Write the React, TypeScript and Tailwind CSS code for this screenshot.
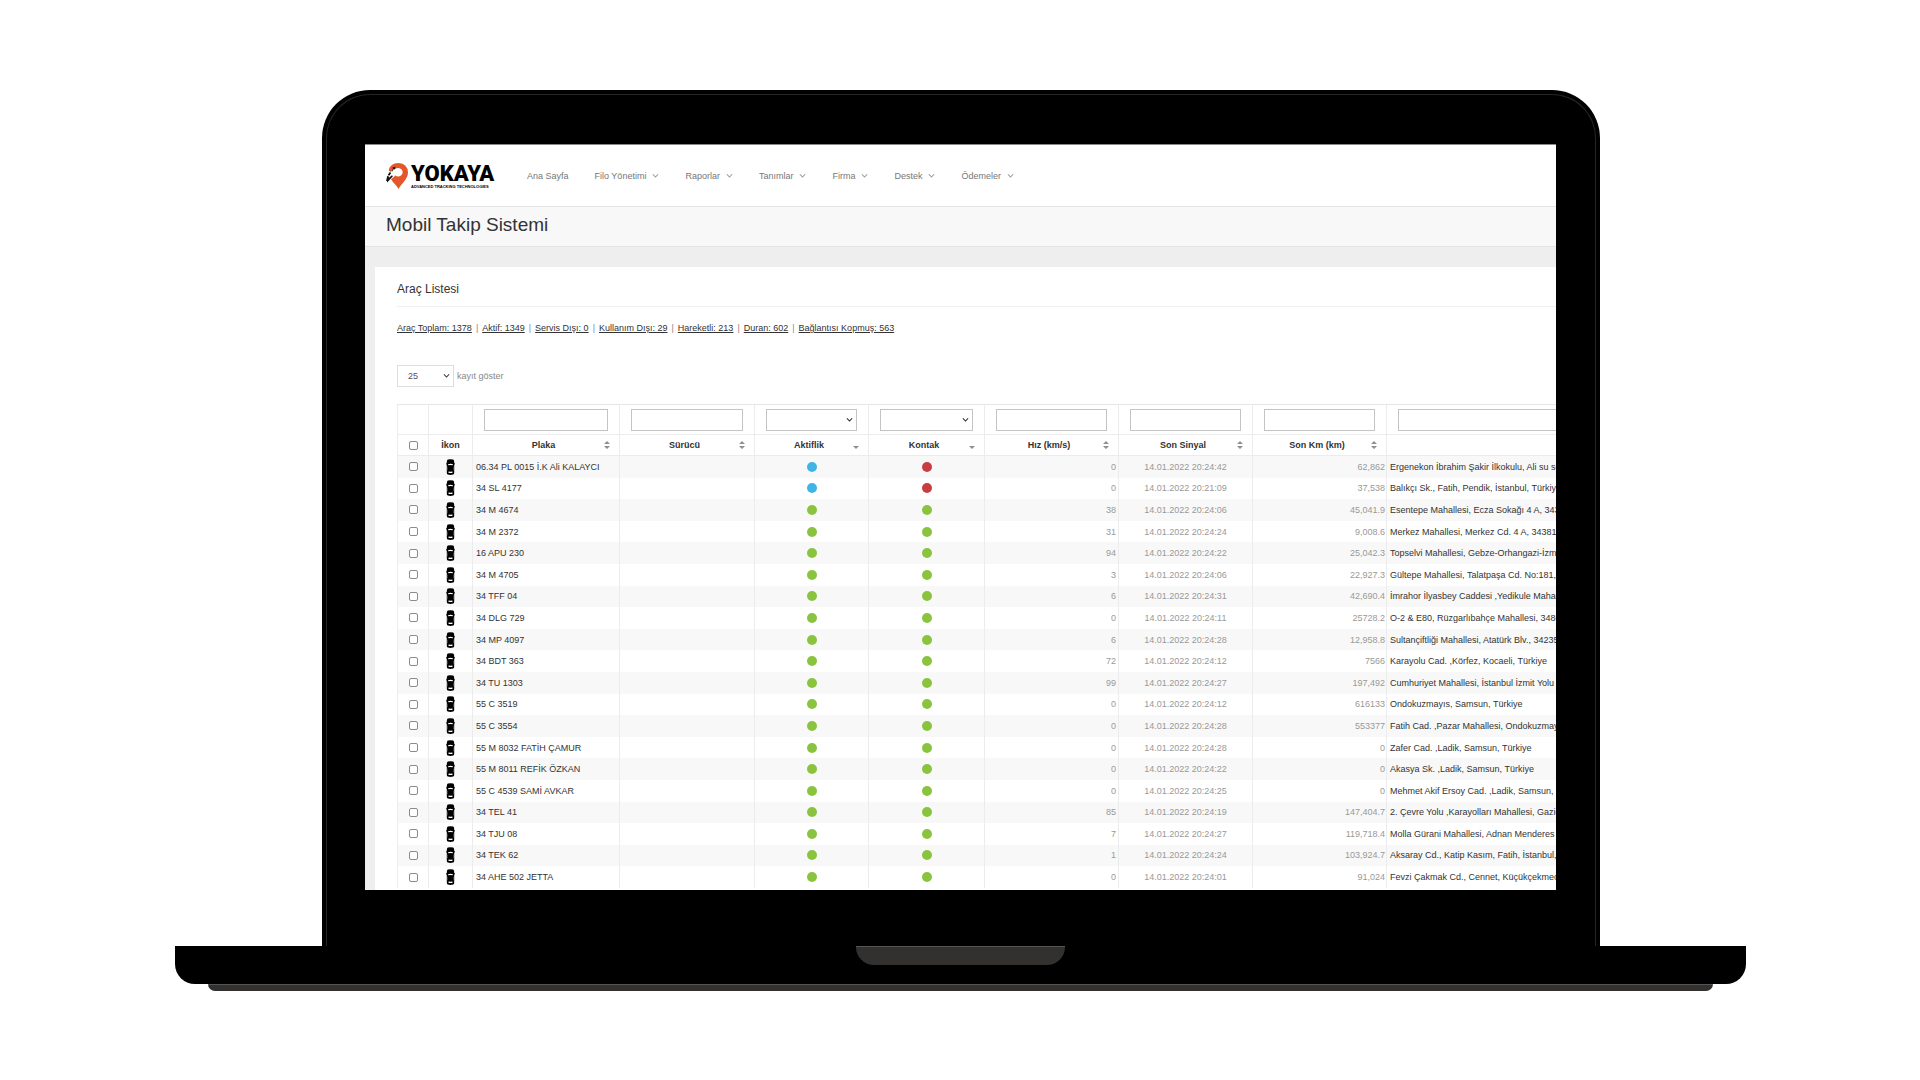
import { useState } from 'react'

type Status = 'blue' | 'red' | 'green'

type Vehicle = {
  plate: string
  active: Status
  ignition: Status
  speed: string
  time: string
  km: string
  address: string
}

const statusColors: Record<Status, string> = {
  blue: 'bg-[#41b4e6]',
  red: 'bg-[#c73e42]',
  green: 'bg-[#8ac43f]',
}

const menu = [
  { label: 'Ana Sayfa', sub: false },
  { label: 'Filo Yönetimi', sub: true },
  { label: 'Raporlar', sub: true },
  { label: 'Tanımlar', sub: true },
  { label: 'Firma', sub: true },
  { label: 'Destek', sub: true },
  { label: 'Ödemeler', sub: true },
]

const totals = [
  'Araç Toplam: 1378',
  'Aktif: 1349',
  'Servis Dışı: 0',
  'Kullanım Dışı: 29',
  'Hareketli: 213',
  'Duran: 602',
  'Bağlantısı Kopmuş: 563',
]

const columns: { label: string; filter: 'text' | 'select'; sort: 'both' | 'down' }[] = [
  { label: 'Plaka', filter: 'text', sort: 'both' },
  { label: 'Sürücü', filter: 'text', sort: 'both' },
  { label: 'Aktiflik', filter: 'select', sort: 'down' },
  { label: 'Kontak', filter: 'select', sort: 'down' },
  { label: 'Hız (km/s)', filter: 'text', sort: 'both' },
  { label: 'Son Sinyal', filter: 'text', sort: 'both' },
  { label: 'Son Km (km)', filter: 'text', sort: 'both' },
]

const row = (plate: string, speed: string, time: string, km: string, address: string, active: Status = 'green', ignition: Status = 'green'): Vehicle =>
  ({ plate, speed, time: `14.01.2022 ${time}`, km, address, active, ignition })

const vehicles: Vehicle[] = [
  row('06.34 PL 0015 İ.K Ali KALAYCI', '0', '20:24:42', '62,862', 'Ergenekon İbrahim Şakir İlkokulu, Ali su sok', 'blue', 'red'),
  row('34 SL 4177', '0', '20:21:09', '37,538', 'Balıkçı Sk., Fatih, Pendik, İstanbul, Türkiye', 'blue', 'red'),
  row('34 M 4674', '38', '20:24:06', '45,041.9', 'Esentepe Mahallesi, Ecza Sokağı 4 A, 343'),
  row('34 M 2372', '31', '20:24:24', '9,008.6', 'Merkez Mahallesi, Merkez Cd. 4 A, 34381 Ş'),
  row('16 APU 230', '94', '20:24:22', '25,042.3', 'Topselvi Mahallesi, Gebze-Orhangazi-İzmir'),
  row('34 M 4705', '3', '20:24:06', '22,927.3', 'Gültepe Mahallesi, Talatpaşa Cd. No:181, 3'),
  row('34 TFF 04', '6', '20:24:31', '42,690.4', 'İmrahor İlyasbey Caddesi ,Yedikule Mahalle'),
  row('34 DLG 729', '0', '20:24:11', '25728.2', 'O-2 & E80, Rüzgarlıbahçe Mahallesi, 3480'),
  row('34 MP 4097', '6', '20:24:28', '12,958.8', 'Sultançiftliği Mahallesi, Atatürk Blv., 34235'),
  row('34 BDT 363', '72', '20:24:12', '7566', 'Karayolu Cad. ,Körfez, Kocaeli, Türkiye'),
  row('34 TU 1303', '99', '20:24:27', '197,492', 'Cumhuriyet Mahallesi, İstanbul İzmit Yolu N'),
  row('55 C 3519', '0', '20:24:12', '616133', 'Ondokuzmayıs, Samsun, Türkiye'),
  row('55 C 3554', '0', '20:24:28', '553377', 'Fatih Cad. ,Pazar Mahallesi, Ondokuzmayı'),
  row('55 M 8032 FATİH ÇAMUR', '0', '20:24:28', '0', 'Zafer Cad. ,Ladik, Samsun, Türkiye'),
  row('55 M 8011 REFİK ÖZKAN', '0', '20:24:22', '0', 'Akasya Sk. ,Ladik, Samsun, Türkiye'),
  row('55 C 4539 SAMİ AVKAR', '0', '20:24:25', '0', 'Mehmet Akif Ersoy Cad. ,Ladik, Samsun, T'),
  row('34 TEL 41', '85', '20:24:19', '147,404.7', '2. Çevre Yolu ,Karayolları Mahallesi, Gazio'),
  row('34 TJU 08', '7', '20:24:27', '119,718.4', 'Molla Gürani Mahallesi, Adnan Menderes B'),
  row('34 TEK 62', '1', '20:24:24', '103,924.7', 'Aksaray Cd., Katip Kasım, Fatih, İstanbul, T'),
  row('34 AHE 502 JETTA', '0', '20:24:01', '91,024', 'Fevzi Çakmak Cd., Cennet, Küçükçekmece'),
]

function Chevron({ className }: { className: string }) {
  return (
    <svg viewBox="0 0 8 6" className={className} fill="none" stroke="currentColor" strokeWidth="1.2" aria-hidden="true">
      <path d="M1 1l3 3.2L7 1" />
    </svg>
  )
}

function SortIcon({ sort }: { sort: 'both' | 'down' }) {
  return (
    <svg viewBox="0 0 6 8" className="h-2 w-1.5 shrink-0 fill-[#8f8f8f]" aria-hidden="true">
      {sort === 'both' ? <path d="M3 0l3 3H0zM3 8l3-3H0z" /> : <path d="M3 8l3-3H0z" />}
    </svg>
  )
}

function CarIcon() {
  return (
    <svg viewBox="0 0 9 16" className="mx-auto block h-4 w-[9px]" aria-hidden="true">
      <path fill="#000" d="M1.800.6Q4.500-.3 7.200.6 8.200 1.300 8.200 3v1l.8.7v.7l-.8-.2v8.500q0 1.500-1 1.900-2.700.6-5.400 0-1-.4-1-1.900V5.200L0 5.400v-.7L.8 4V3Q.8 1.300 1.800.6z" />
      <path fill="#fff" d="M2 5.200Q4.500 4.100 7 5.200L6.600 6.300Q4.500 5.800 2.400 6.300zM2.600 12.600q1.900.3 3.800 0l.2 1.100q-2.100.4-4.200 0z" />
      <path fill="#888" d="M1.500 7.200l.4.800v3l-.4.800zM7.500 7.200l-.4.800v3l.4.800z" />
    </svg>
  )
}

function Logo() {
  return (
    <a href="#" className="flex w-[108px] items-center gap-[3px]">
      <svg viewBox="0 0 22 26" className="h-[26px] w-[22px] shrink-0" aria-hidden="true">
        <path fill="#e4572a" d="M12.500 0C7 0 3.200 3.200 2.800 7.600l1.900 1.300L7.500 5l1.500 1.200Q11 4.400 13.500 5.200q3.500 1.300 3.100 4.600-.6 3.200-4 3.600-1.800.1-3.100-1L5 16.200Q6.500 18.700 9 21.200 11 23.400 12.500 26q1.800-3.300 5-6.800Q22 14 22 9.500 21.600.6 12.500 0z" />
        <path fill="#111" d="M6.400 4.600l3-.8-.8 3-.8-.7-1.700 2.400-.7-.6 1.600-2.500zM3.700 9l1.500 1.100-1.900 2.700-1.600-.9zM1.300 12.800l1.900 1-.5 1.300 3.200-2.800 1 .9-5.700 6.200-.3-1.700-.9.2z" />
      </svg>
      <span className="flex flex-col text-black">
        <span className="font-['Roboto',sans-serif] text-[22px] leading-[21px] font-black">YOKAYA</span>
        <span className="text-[4px] leading-[5px] font-bold whitespace-nowrap">ADVANCED TRACKING TECHNOLOGIES</span>
      </span>
    </a>
  )
}

function CheckBox({ label }: { label: string }) {
  return (
    <input
      type="checkbox"
      aria-label={label}
      className="mx-auto block size-[9px] appearance-none rounded-xs border border-[#8c8c8c] bg-white checked:bg-[#41b4e6]"
    />
  )
}

function VehicleTable() {
  const th = 'border-l border-[#ececec] p-0'
  return (
    <table className="h-full w-full table-fixed border-separate border-spacing-0 border-t border-[#e6e6e6] text-[9px] leading-[12px] text-[#333]">
      <colgroup>
        <col className="w-[31px]" />
        <col className="w-[44px]" />
        <col className="w-[147px]" />
        <col className="w-[135px]" />
        <col className="w-[114px]" />
        <col className="w-[116px]" />
        <col className="w-[134px]" />
        <col className="w-[134px]" />
        <col className="w-[134px]" />
        <col />
      </colgroup>
      <thead>
        <tr className="h-[29px]">
          <td className={th} />
          <td className={th} />
          {columns.map((col) => (
            <td key={col.label} className="border-l border-[#ececec] px-[11px] py-0">
              {col.filter === 'text' ? (
                <input aria-label={col.label} className="block h-[22px] w-full border border-[#c4c4c4] bg-white px-1" />
              ) : (
                <div className="relative">
                  <select aria-label={col.label} className="block h-[22px] w-full appearance-none border border-[#c4c4c4] bg-white px-1">
                    <option value="" />
                  </select>
                  <Chevron className="pointer-events-none absolute top-2 right-1 h-1.5 w-[7px] text-[#222]" />
                </div>
              )}
            </td>
          ))}
          <td className="overflow-hidden border-l border-[#ececec] py-0 pr-0 pl-[11px]">
            <input aria-label="Adres" className="block h-[22px] w-full border border-r-0 border-[#c4c4c4] bg-white px-1" />
          </td>
        </tr>
        <tr className="h-[22px]">
          <th className="border-y border-l border-[#ececec] p-0"><CheckBox label="Tümünü seç" /></th>
          <th className="border-y border-l border-[#ececec] p-0">İkon</th>
          {columns.map((col) => (
            <th key={col.label} className="border-y border-l border-[#ececec] py-0 pr-[9px] pl-[10px]">
              <div className="flex items-center">
                <span className="flex-1">{col.label}</span>
                <SortIcon sort={col.sort} />
              </div>
            </th>
          ))}
          <th className="border-y border-l border-[#ececec] p-0" />
        </tr>
      </thead>
      <tbody>
        {vehicles.map((v) => (
          <tr key={v.plate} className="odd:bg-[#f8f8f8]">
            <td className={th}><CheckBox label={v.plate} /></td>
            <td className={th}><CarIcon /></td>
            <td className="border-l border-[#ececec] py-0 pr-0 pl-[3px]">{v.plate}</td>
            <td className={th} />
            <td className={th}><span className={`mx-auto block size-2.5 rounded-full ${statusColors[v.active]}`} /></td>
            <td className={th}><span className={`mx-auto block size-2.5 rounded-full ${statusColors[v.ignition]}`} /></td>
            <td className="border-l border-[#ececec] py-0 pr-0.5 pl-0 text-right text-[#999]">{v.speed}</td>
            <td className="border-l border-[#ececec] p-0 text-center text-[#999]">{v.time}</td>
            <td className="border-l border-[#ececec] py-0 pr-px pl-0 text-right text-[#999]">{v.km}</td>
            <td className="overflow-hidden border-l border-[#ececec] py-0 pr-0 pl-[3px] whitespace-nowrap">{v.address}</td>
          </tr>
        ))}
      </tbody>
    </table>
  )
}

function TrackingPage() {
  const [pageSize, setPageSize] = useState('25')

  return (
    <div className="flex min-h-0 flex-1 flex-col overflow-hidden border-t border-[#8c888c] bg-[#eee] text-[#333]">
      <header className="flex h-[61px] shrink-0 items-center bg-white pl-[21px]">
        <Logo />
        <nav className="ml-[33px] flex gap-[26px] text-[9px] leading-[12px] text-[#777]">
          {menu.map((item) => (
            <a key={item.label} href="#" className="flex items-center gap-1.5 whitespace-nowrap">
              {item.label}
              {item.sub ? <Chevron className="h-1.5 w-[7px] text-[#999]" /> : null}
            </a>
          ))}
        </nav>
      </header>
      <div className="flex h-[41px] shrink-0 items-center border-y border-[#e4e4e4] bg-[#f8f8f8] pl-[21px]">
        <h1 className="pb-1 text-[19px] leading-6">Mobil Takip Sistemi</h1>
      </div>
      <section className="mt-5 ml-2.5 flex min-h-0 flex-1 flex-col bg-white pb-0.5 pl-[22px]">
        <h2 className="flex h-10 shrink-0 items-center border-b border-[#f0f0f0] pt-1 text-[12px] leading-4">Araç Listesi</h2>
        <div className="mt-[15px] flex shrink-0 gap-1 text-[9px] leading-[12px] text-[#888]">
          {totals.map((text, i) => (
            <span key={text} className="flex gap-1 whitespace-nowrap">
              {i > 0 ? <span>|</span> : null}
              <a href="#" className="text-[#333] underline">{text}</a>
            </span>
          ))}
        </div>
        <label className="mt-[31px] flex shrink-0 items-center gap-[3px] text-[9px] leading-[12px] text-[#888]">
          <span className="relative">
            <select
              value={pageSize}
              onChange={(e) => setPageSize(e.target.value)}
              className="block h-[22px] w-[57px] appearance-none border border-[#ddd] bg-white pl-2.5 text-[#555]"
            >
              <option>25</option>
              <option>50</option>
              <option>100</option>
            </select>
            <Chevron className="pointer-events-none absolute top-2 right-1 h-1.5 w-[7px] text-[#333]" />
          </span>
          kayıt göster
        </label>
        <div className="mt-[17px] min-h-0 flex-1">
          <VehicleTable />
        </div>
      </section>
    </div>
  )
}

export default function App() {
  return (
    <main className="flex h-screen flex-col bg-white pt-[90px] pr-[174px] pb-[89px] pl-[175px] font-['Liberation_Sans',Arial,sans-serif]">
      <div className="mr-[146px] ml-[147px] flex min-h-0 flex-1 flex-col rounded-t-[48px] bg-black px-1 pt-1">
        <div className="flex min-h-0 flex-1 flex-col rounded-t-[44px] border border-b-0 border-[#262626] pt-[49px] pr-[39px] pb-14 pl-[38px]">
          <TrackingPage />
        </div>
      </div>
      <div className="flex h-[38px] shrink-0 justify-center rounded-b-[20px] bg-black">
        <div className="h-[19px] w-[209px] rounded-b-[18px] border-t border-[#555] bg-[#32312f]" />
      </div>
      <div className="mx-[33px] h-[7px] shrink-0 rounded-b-[7px] border-t border-[#555] bg-[#32312f]" />
    </main>
  )
}
